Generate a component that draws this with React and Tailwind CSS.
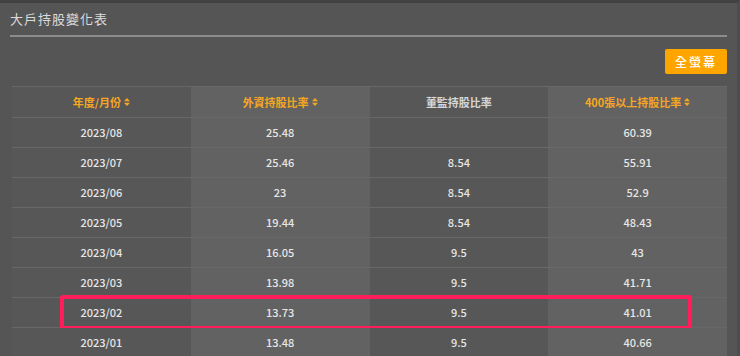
import React from 'react';

const rows = [
  { month: '2023/08', foreign: '25.48', board: '', big: '60.39' },
  { month: '2023/07', foreign: '25.46', board: '8.54', big: '55.91' },
  { month: '2023/06', foreign: '23', board: '8.54', big: '52.9' },
  { month: '2023/05', foreign: '19.44', board: '8.54', big: '48.43' },
  { month: '2023/04', foreign: '16.05', board: '9.5', big: '43' },
  { month: '2023/03', foreign: '13.98', board: '9.5', big: '41.71' },
  { month: '2023/02', foreign: '13.73', board: '9.5', big: '41.01', marked: true },
  { month: '2023/01', foreign: '13.48', board: '9.5', big: '40.66' },
];

// small up/down sort arrows next to sortable headers
function SortIcon() {
  return (
    <svg width="6" height="8" viewBox="0 0 6 8" className="ml-[3px] inline-block" fill="currentColor">
      <path d="M3 0 L6 3.3 L0 3.3 Z" />
      <path d="M3 8 L6 4.7 L0 4.7 Z" />
    </svg>
  );
}

function App() {
  return (
    <div
      className="w-[740px] h-[356px] overflow-hidden bg-[#555555] border-t-[3px] border-t-[#424242] border-r-[3px] border-r-[#4d4d4d]"
      style={{ fontFamily: '"Noto Sans CJK TC", "Noto Sans", sans-serif' }}
    >
      <div className="pl-[10px] pr-[10px]">
        <div className="h-[32px] pt-[7px] text-[13px] leading-[18px] tracking-[1px] text-[#dcdcdc]">
          大戶持股變化表
        </div>
        <div className="h-[2px] bg-[#8c8c8c] mr-[0px]" />
        <div className="flex justify-end pt-[12px] pb-[12px]">
          <button className="h-[25px] w-[62px] rounded-[2px] bg-[#ffa500] text-[12px] tracking-[2px] text-white font-medium">
            全螢幕
          </button>
        </div>

        <div className="ml-[2px] w-[715px] text-[11px] font-medium">
          <div className="grid grid-cols-4 h-[32px] border-t border-[#686868] border-b">
            <div className="flex items-center justify-center bg-[#575757] text-[#f5a623] font-bold">
              年度/月份<SortIcon />
            </div>
            <div className="flex items-center justify-center bg-[#626262] text-[#f5a623] font-bold">
              外資持股比率<SortIcon />
            </div>
            <div className="flex items-center justify-center bg-[#575757] text-[#d6d6d6] font-bold">
              董監持股比率
            </div>
            <div className="flex items-center justify-center bg-[#626262] text-[#f5a623] font-bold">
              400張以上持股比率<SortIcon />
            </div>
          </div>

          {rows.map((r) => (
            <div key={r.month} className="relative grid grid-cols-4 h-[30px] border-b border-[#686868] text-[#e6e6e6]">
              <div className="flex items-center justify-center bg-[#575757]">{r.month}</div>
              <div className="flex items-center justify-center bg-[#626262]">{r.foreign}</div>
              <div className="flex items-center justify-center bg-[#575757]">{r.board}</div>
              <div className="flex items-center justify-center bg-[#626262]">{r.big}</div>
              {r.marked && (
                <div className="absolute left-[48px] top-[-3px] w-[632px] h-[35px] rounded-[3px] border-[4px] border-[#ff1e5a]" />
              )}
            </div>
          ))}
        </div>
      </div>
    </div>
  );
}

export default App;
